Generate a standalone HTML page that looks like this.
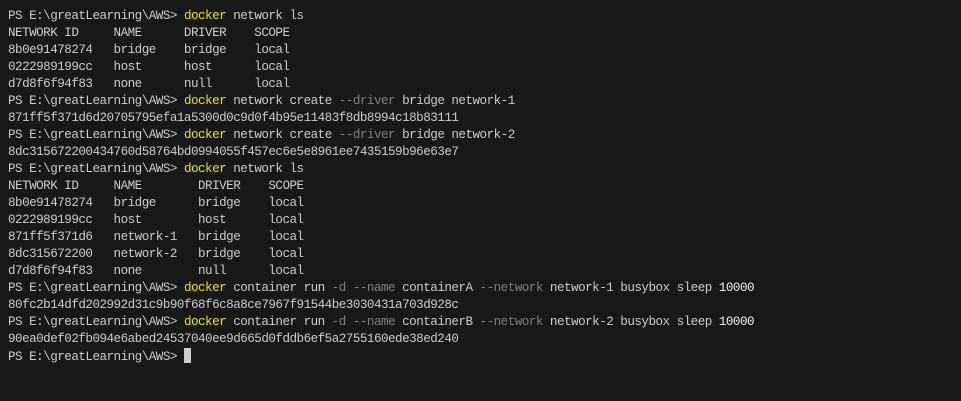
<!DOCTYPE html>
<html><head><style>
html,body{margin:0;padding:0;background:#181818;width:961px;height:401px;overflow:hidden}
pre{margin:0;padding:7.5px 0 0 8px;font-family:"Liberation Mono",monospace;font-size:12.6px;letter-spacing:-0.52px;line-height:17px;color:#cccccc;white-space:pre}
.y{color:#e5e510}.g{color:#808080}.w{color:#f0f0f0}
.c{display:inline-block;width:7px;height:15px;background:#cccccc;vertical-align:-3px}
</style></head><body><pre>PS E:\greatLearning\AWS&gt; <span class="y">docker</span> network ls
NETWORK ID     NAME      DRIVER    SCOPE
8b0e91478274   bridge    bridge    local
0222989199cc   host      host      local
d7d8f6f94f83   none      null      local
PS E:\greatLearning\AWS&gt; <span class="y">docker</span> network create <span class="g">--driver</span> bridge network-1
871ff5f371d6d20705795efa1a5300d0c9d0f4b95e11483f8db8994c18b83111
PS E:\greatLearning\AWS&gt; <span class="y">docker</span> network create <span class="g">--driver</span> bridge network-2
8dc315672200434760d58764bd0994055f457ec6e5e8961ee7435159b96e63e7
PS E:\greatLearning\AWS&gt; <span class="y">docker</span> network ls
NETWORK ID     NAME        DRIVER    SCOPE
8b0e91478274   bridge      bridge    local
0222989199cc   host        host      local
871ff5f371d6   network-1   bridge    local
8dc315672200   network-2   bridge    local
d7d8f6f94f83   none        null      local
PS E:\greatLearning\AWS&gt; <span class="y">docker</span> container run <span class="g">-d</span> <span class="g">--name</span> containerA <span class="g">--network</span> network-1 busybox sleep <span class="w">10000</span>
80fc2b14dfd202992d31c9b90f68f6c8a8ce7967f91544be3030431a703d928c
PS E:\greatLearning\AWS&gt; <span class="y">docker</span> container run <span class="g">-d</span> <span class="g">--name</span> containerB <span class="g">--network</span> network-2 busybox sleep <span class="w">10000</span>
90ea0def02fb094e6abed24537040ee9d665d0fddb6ef5a2755160ede38ed240
PS E:\greatLearning\AWS&gt; <span class="c"></span></pre></body></html>
